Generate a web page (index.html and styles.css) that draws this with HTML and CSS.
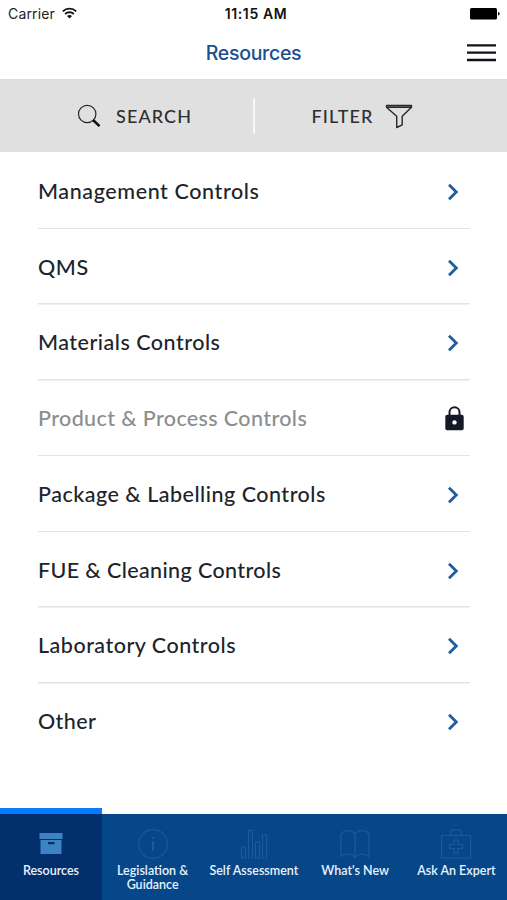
FILE: index.html
```html
<!DOCTYPE html>
<html lang="en">
<head>
<meta charset="utf-8">
<title>Resources</title>
<link rel="stylesheet" href="styles.css">
</head>
<body>
<div class="app">
  <div class="status">
    <div class="carrier"><span>Carrier</span>
      <svg width="15" height="12" viewBox="0 0 15 12" fill="none" stroke="#111" stroke-width="1.8"><path d="M.8 4.4a9.6 9.6 0 0 1 13.4 0M3.2 7a6.2 6.2 0 0 1 8.6 0"/><path d="M7.5 11.5 5 9.1a3.6 3.6 0 0 1 5 0z" fill="#111" stroke="none"/></svg>
    </div>
    <time class="clock">11:15 AM</time>
    <svg class="battery" width="30" height="12" viewBox="0 0 30 12"><rect width="27" height="11.5" rx="1.5"/><path d="M28 4q1.700 0 1.700 1.800T28 7.600z"/></svg>
  </div>
  <header class="header">
    <h1 class="title">Resources</h1>
    <svg class="menu" width="29" height="18" viewBox="0 0 29 18" fill="none" stroke="#111318" stroke-width="2.300"><path d="M0 1.400h29M0 8.700h29M0 16h29"/></svg>
  </header>
  <div class="tools">
    <div class="tool search">
      <svg width="24" height="24" viewBox="0 0 24 24" fill="none" stroke="#24272b"><circle cx="10.200" cy="10" r="8.700" stroke-width="1.200"/><path d="m16 16 6.500 6.200" stroke="#08090b" stroke-width="2.500"/></svg>
      <span>SEARCH</span>
    </div>
    <div class="tool filter">
      <span>FILTER</span>
      <svg width="28" height="25" viewBox="0 0 28 25" fill="none" stroke="#24272b" stroke-width="1.400" stroke-linejoin="round"><path d="M1.500 1.500h25v1.800l-9.300 9v8.500l-5.500 2.700V12.300l-10.200-9zM1.500 3.200h25"/></svg>
    </div>
  </div>
  <main class="list">
    <div class="row"><span class="loose">Management Controls</span><svg class="chev" viewBox="0 0 12 18"><path d="m2 1.800 7.300 7.200L2 16.200"/></svg></div>
    <div class="row"><span class="loose">QMS</span><svg class="chev" viewBox="0 0 12 18"><path d="m2 1.800 7.300 7.200L2 16.200"/></svg></div>
    <div class="row"><span>Materials Controls</span><svg class="chev" viewBox="0 0 12 18"><path d="m2 1.800 7.300 7.200L2 16.200"/></svg></div>
    <div class="row locked"><span class="snug">Product &amp; Process Controls</span><svg class="lock" viewBox="0 0 19 25"><path d="M4.500 10V6.200a5 5 0 0 1 10 0V10" fill="none" stroke="#141927" stroke-width="2"/><rect x=".3" y="8.700" width="18.400" height="15.500" rx="2" fill="#141927"/><circle cx="9.500" cy="16.400" r="2.200" fill="#fff"/></svg></div>
    <div class="row"><span>Package &amp; Labelling Controls</span><svg class="chev" viewBox="0 0 12 18"><path d="m2 1.800 7.300 7.200L2 16.200"/></svg></div>
    <div class="row"><span class="snug">FUE &amp; Cleaning Controls</span><svg class="chev" viewBox="0 0 12 18"><path d="m2 1.800 7.300 7.200L2 16.200"/></svg></div>
    <div class="row"><span>Laboratory Controls</span><svg class="chev" viewBox="0 0 12 18"><path d="m2 1.800 7.300 7.200L2 16.200"/></svg></div>
    <div class="row"><span class="snug">Other</span><svg class="chev" viewBox="0 0 12 18"><path d="m2 1.800 7.300 7.200L2 16.200"/></svg></div>
  </main>
  <nav class="tabs">
    <a class="tab active">
      <svg viewBox="0 0 32 32"><path fill="#3b83c2" d="M4.500 5h23v6h-23zM5.500 12h21v14h-21z"/><path fill="#03306c" d="M13 14h6.500v2.200H13z"/></svg>
      <span>Resources</span>
    </a>
    <a class="tab">
      <svg viewBox="0 0 32 32"><circle cx="16" cy="16" r="14.300"/><path d="M16 13v10M16 9v2" stroke-width="2"/></svg>
      <span>Legislation &amp;<br>Guidance</span>
    </a>
    <a class="tab">
      <svg viewBox="0 0 32 32"><path d="M3.500 19h4v11h-4zM10.500 2.500h4V30h-4zM17.500 14h4v16h-4zM24.500 7h4v23h-4z"/></svg>
      <span>Self Assessment</span>
    </a>
    <a class="tab">
      <svg viewBox="0 0 32 32"><path d="M16 5.500Q13 2.500 9 2.500T2 5.500v23Q5 26 9 26t7 3.500Q19 26 23 26t7 2.500v-23Q27 2.500 23 2.500t-7 3zV29"/></svg>
      <span>What's New</span>
    </a>
    <a class="tab">
      <svg viewBox="0 0 32 32"><path d="M1.500 7.500h29V30h-29zM10.500 7.500v-4l1.500-1.500h8l1.500 1.500v4M14 12h4v4.500h4.500v4H18V25h-4v-4.500H9.500v-4H14z"/></svg>
      <span>Ask An Expert</span>
    </a>
  </nav>
</div>
</body>
</html>
```
FILE: styles.css
```css
* { box-sizing: border-box; }
body { margin: 0; background: #fff; font-family: Lato, "Liberation Sans", sans-serif; }
.app { width: 507px; height: 900px; display: flex; flex-direction: column; overflow: hidden; }
svg { display: block; flex: none; }
.status { height: 27px; padding: 0 7px 0 8px; display: grid; grid-template-columns: 1fr auto 1fr; align-items: center; font: 14px/27px Inter, sans-serif; color: #222; }
.carrier { display: flex; align-items: center; gap: 7px; }
.carrier span { letter-spacing: .15px; }
.carrier svg { margin-top: -2px; }
.clock { padding: 1px 0 0 4px; font-size: 14px; line-height: 26px; font-weight: 600; color: #111; letter-spacing: .6px; }
.battery { justify-self: end; }
.header { height: 52px; display: grid; grid-template-columns: 1fr auto 1fr; align-items: center; padding-right: 11px; padding-left: 11px; }
.title { grid-column: 2; margin: 0; font: 500 19.5px/24px Inter, sans-serif; letter-spacing: -.3px; color: #18508f; }
.menu { justify-self: end; }
.tools { height: 73px; flex: none; background: #e0e0e0; border-top: 1px solid #dcdcdc; display: flex; align-items: center; }
.tool { height: 36px; display: flex; align-items: center; font-size: 18px; font-weight: 500; letter-spacing: 1.1px; color: #2b2e33; }
.tool span { margin-top: -1px; }
.search { width: 255px; border-right: 2px solid #f6f6f6; padding-left: 77px; gap: 15px; }
.filter { padding-left: 56.5px; gap: 12px; }
.list { padding: 1.25px 37px 0 38px; flex: 1; }
.row { height: 75.75px; padding-top: 1.5px; display: flex; align-items: center; justify-content: space-between; font-size: 21.5px; font-weight: 500; color: #20242a; letter-spacing: .5px; background: linear-gradient(#e3e3e4, #e3e3e4) bottom / 100% 1.5px no-repeat; }
.row span { margin-top: -2px; }
.row:last-child { background: none; }
.row .loose { letter-spacing: .6px; }
.row .snug { letter-spacing: .38px; }
.row.locked { color: #8b8d8f; }
.chev { width: 12px; height: 18px; margin-right: 11px; fill: none; stroke: #1e5e9f; stroke-width: 2.8; }
.lock { width: 19px; height: 25px; margin: -2px 6px 0 0; }
.tabs { height: 86px; flex: none; display: grid; grid-template-columns: 102px repeat(4, 101.25px); background: #06478a; }
.tab { display: flex; flex-direction: column; align-items: center; padding-top: 14px; color: #eaf2fb; font-size: 12.5px; line-height: 13.5px; font-weight: 600; text-align: center; white-space: nowrap; }
.tab svg { width: 32px; height: 32px; margin-bottom: 4px; fill: none; stroke: #1c5b9b; stroke-width: 1.2; }
.tab.active { margin-top: -6px; border-top: 6px solid #087aff; background: #03306c; }
.tab.active svg { stroke: none; }
```
